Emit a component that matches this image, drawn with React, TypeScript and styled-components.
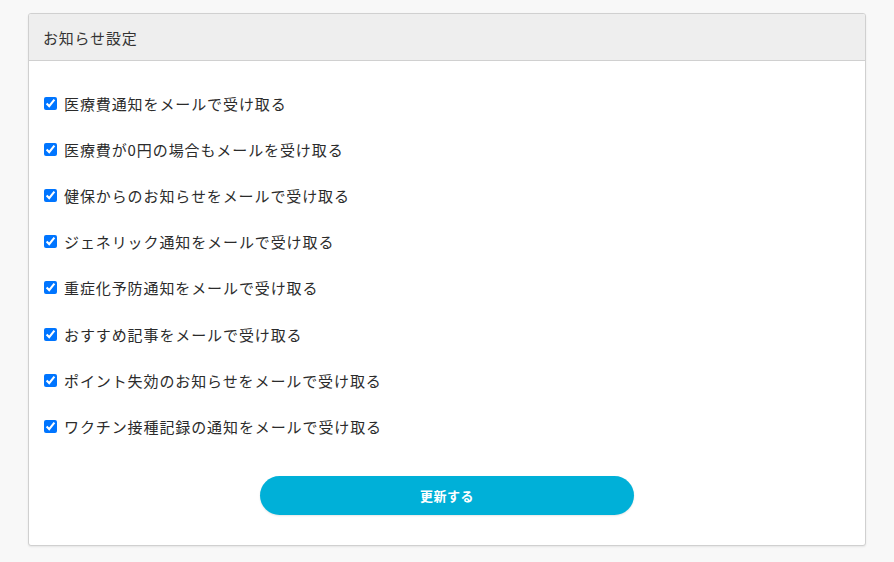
import styled, { createGlobalStyle } from "styled-components";

const GlobalStyle = createGlobalStyle`
  html, body {
    margin: 0;
    padding: 0;
    background: #f8f8f8;
    font-family: "Noto Sans CJK JP", "Noto Sans", sans-serif;
    color: #333;
  }
`;

const Page = styled.div`
  padding: 13px 28px 16px 28px;
`;

const Card = styled.section`
  background: #fff;
  border: 1px solid #d0d0d0;
  border-radius: 3px;
  box-shadow: 0 1px 2px rgba(0, 0, 0, 0.08);
  overflow: hidden;
`;

const CardHeader = styled.header`
  height: 46px;
  display: flex;
  align-items: center;
  padding: 0 14px;
  background: #eeeeee;
  border-bottom: 1px solid #d0d0d0;
  font-size: 15px;
  letter-spacing: 0.8px;
  color: #333;
`;

const CardBody = styled.div`
  padding: 19px 15px 30px 15px;
  display: flex;
  flex-direction: column;
`;

const List = styled.div`
  display: flex;
  flex-direction: column;
`;

const Row = styled.label`
  height: 46.2px;
  display: flex;
  align-items: center;
  gap: 7px;
  font-size: 15px;
  letter-spacing: 0.9px;
  color: #2b2b2b;
`;

const Check = styled.input`
  width: 13px;
  height: 13px;
  margin: 0;
  accent-color: #0075ff;
`;

const ButtonRow = styled.div`
  display: flex;
  justify-content: center;
  margin-top: 26px;
`;

const SubmitButton = styled.button`
  width: 374px;
  height: 39px;
  border: none;
  border-radius: 20px;
  background: #00b0d8;
  color: #fff;
  font-family: "Noto Sans CJK JP", "Noto Sans", sans-serif;
  font-size: 13px;
  font-weight: 700;
  letter-spacing: 0.5px;
  box-shadow: 0 1px 2px rgba(0, 0, 0, 0.1);
`;

const items = [
  "医療費通知をメールで受け取る",
  "医療費が0円の場合もメールを受け取る",
  "健保からのお知らせをメールで受け取る",
  "ジェネリック通知をメールで受け取る",
  "重症化予防通知をメールで受け取る",
  "おすすめ記事をメールで受け取る",
  "ポイント失効のお知らせをメールで受け取る",
  "ワクチン接種記録の通知をメールで受け取る",
];

export default function App() {
  return (
    <>
      <GlobalStyle />
      <Page>
        <Card>
          <CardHeader>お知らせ設定</CardHeader>
          <CardBody>
            <List>
              {items.map((label) => (
                <Row key={label}>
                  <Check type="checkbox" defaultChecked />
                  {label}
                </Row>
              ))}
            </List>
            <ButtonRow>
              <SubmitButton type="button">更新する</SubmitButton>
            </ButtonRow>
          </CardBody>
        </Card>
      </Page>
    </>
  );
}
